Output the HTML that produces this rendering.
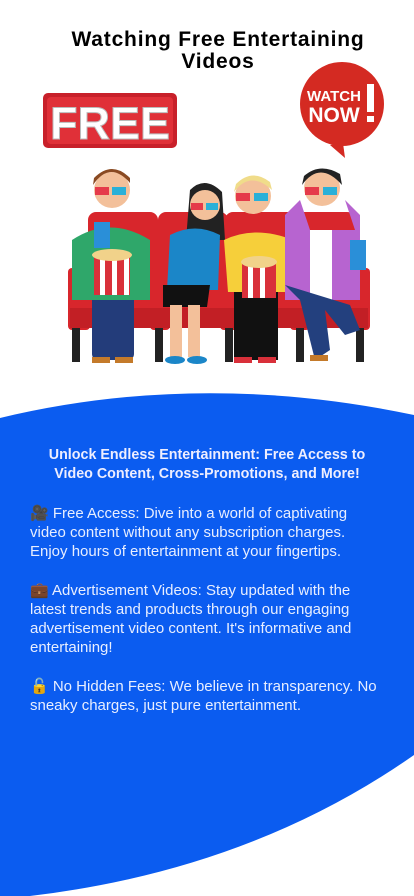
<!DOCTYPE html>
<html><head><meta charset="utf-8">
<style>
html,body{margin:0;padding:0;background:#fff;}
body{width:414px;height:896px;position:relative;overflow:hidden;font-family:"Liberation Sans",sans-serif;}
h1{position:absolute;top:29px;left:0;width:436px;margin:0;text-align:center;font-size:21px;line-height:22px;font-weight:bold;color:#000;letter-spacing:0.8px;}
#bg{position:absolute;left:0;top:0;}
.t{position:absolute;color:#fff;white-space:nowrap;}
.hd{top:446px;left:0;width:414px;text-align:center;font-weight:bold;font-size:14.3px;line-height:19px;color:#eef;}
.p{left:30px;font-size:15px;line-height:19px;color:#e8eeff;}
</style></head><body>
<svg id="bg" width="414" height="896" viewBox="0 0 414 896">
<path d="M0 418 Q200 370 414 415 L414 755 Q250 870 30 896 L0 896 Z" fill="#0b5cf0"/>
<rect x="43" y="93" width="134" height="55" rx="5" fill="#c8202a"/>
<rect x="47" y="97" width="126" height="47" rx="4" fill="#e03038"/>
<text x="110" y="139" text-anchor="middle" font-family="Liberation Sans" font-weight="bold" font-size="45" fill="#fff" stroke="#bbb" stroke-width="1">FREE</text>
<path d="M330 145 L345 158 L343 143 Z" fill="#d42a22"/>
<circle cx="342" cy="104" r="42" fill="#d42a22"/>
<text x="334" y="101" text-anchor="middle" font-family="Liberation Sans" font-weight="bold" font-size="15" fill="#fff">WATCH</text>
<text x="334" y="122" text-anchor="middle" font-family="Liberation Sans" font-weight="bold" font-size="21" fill="#fff">NOW</text>
<rect x="367" y="84" width="7" height="28" fill="#fff"/><rect x="367" y="116" width="7" height="6" fill="#fff"/>
<g fill="#d8262c">
<rect x="88" y="212" width="70" height="110" rx="8"/>
<rect x="158" y="212" width="70" height="110" rx="8"/>
<rect x="225" y="212" width="70" height="110" rx="8"/>
<rect x="295" y="212" width="60" height="110" rx="8"/>
<rect x="68" y="268" width="22" height="62" rx="4"/>
<rect x="150" y="268" width="20" height="62" rx="4"/>
<rect x="220" y="268" width="20" height="62" rx="4"/>
<rect x="290" y="268" width="20" height="62" rx="4"/>
<rect x="350" y="268" width="20" height="62" rx="4"/>
<rect x="70" y="308" width="298" height="20" fill="#c21f25"/>
</g>
<g fill="#222"><rect x="72" y="328" width="8" height="34"/><rect x="155" y="328" width="8" height="34"/><rect x="225" y="328" width="8" height="34"/><rect x="296" y="328" width="8" height="34"/><rect x="356" y="328" width="8" height="34"/></g>
<rect x="92" y="290" width="42" height="70" rx="6" fill="#233c7a"/>
<path d="M72 240 Q110 215 150 240 L150 300 L72 300 Z" fill="#2fa76a"/>
<rect x="94" y="255" width="36" height="40" fill="#d9303a"/><rect x="100" y="255" width="5" height="40" fill="#fff"/><rect x="112" y="255" width="5" height="40" fill="#fff"/><rect x="124" y="255" width="5" height="40" fill="#fff"/>
<ellipse cx="112" cy="255" rx="20" ry="6" fill="#f1d28a"/>
<rect x="94" y="222" width="16" height="26" fill="#2a8fd8"/>
<circle cx="112" cy="190" r="18" fill="#f3c09a"/><path d="M93 185 Q110 160 130 183 L130 178 Q112 160 94 178 Z" fill="#8a4a22"/>
<rect x="95" y="187" width="14" height="8" fill="#e53a4a"/><rect x="112" y="187" width="14" height="8" fill="#2ab0d8"/>
<rect x="92" y="357" width="18" height="6" fill="#c47a2a"/><rect x="115" y="357" width="18" height="6" fill="#c47a2a"/>
<path d="M190 190 Q205 175 222 192 L225 240 L186 240 Z" fill="#222"/>
<circle cx="205" cy="205" r="15" fill="#f3c09a"/>
<rect x="191" y="203" width="12" height="7" fill="#e53a4a"/><rect x="206" y="203" width="12" height="7" fill="#2ab0d8"/>
<path d="M170 235 Q195 222 220 235 L218 290 L167 290 Z" fill="#1b86c8"/>
<path d="M163 285 L210 285 L207 307 L163 307 Z" fill="#111"/>
<rect x="170" y="305" width="12" height="52" fill="#f3c09a"/><rect x="188" y="305" width="12" height="52" fill="#f3c09a"/>
<ellipse cx="175" cy="360" rx="10" ry="4" fill="#1b86c8"/><ellipse cx="197" cy="360" rx="10" ry="4" fill="#1b86c8"/>
<rect x="234" y="288" width="44" height="72" fill="#111"/>
<path d="M224 240 Q255 225 293 240 L290 292 L228 292 Z" fill="#f6cf3a"/>
<rect x="242" y="262" width="34" height="36" fill="#d9303a"/><rect x="248" y="262" width="5" height="36" fill="#fff"/><rect x="260" y="262" width="5" height="36" fill="#fff"/>
<ellipse cx="259" cy="262" rx="18" ry="6" fill="#f1d28a"/>
<circle cx="253" cy="196" r="18" fill="#f3c09a"/><path d="M234 192 Q250 170 272 190 L270 182 Q252 168 236 184 Z" fill="#f0dc8a"/>
<rect x="236" y="193" width="14" height="8" fill="#e53a4a"/><rect x="254" y="193" width="14" height="8" fill="#2ab0d8"/>
<rect x="234" y="357" width="18" height="6" fill="#d9303a"/><rect x="258" y="357" width="18" height="6" fill="#d9303a"/>
<path d="M285 215 L300 200 L310 230 L355 230 L345 200 L360 215 L360 300 L285 300 Z" fill="#b764d0"/>
<rect x="310" y="230" width="22" height="70" fill="#fff"/>
<path d="M285 285 L350 305 L360 330 L345 335 L325 310 L330 350 L315 360 L300 300 Z" fill="#23407e"/>
<rect x="310" y="355" width="18" height="6" fill="#c47a2a"/>
<circle cx="322" cy="188" r="18" fill="#f3c09a"/><path d="M302 185 Q320 160 342 185 L340 174 Q320 162 304 176 Z" fill="#222"/>
<rect x="305" y="187" width="14" height="8" fill="#e53a4a"/><rect x="323" y="187" width="14" height="8" fill="#2ab0d8"/>
<rect x="350" y="240" width="16" height="30" fill="#2a8fd8"/>
</svg>
<h1>Watching Free Entertaining<br>Videos</h1>
<div class="t hd">Unlock Endless Entertainment: Free Access to<br>Video Content, Cross-Promotions, and More!</div>
<div class="t p" style="top:504px">🎥 Free Access: Dive into a world of captivating<br>video content without any subscription charges.<br>Enjoy hours of entertainment at your fingertips.</div>
<div class="t p" style="top:581px">💼 Advertisement Videos: Stay updated with the<br>latest trends and products through our engaging<br>advertisement video content. It's informative and<br>entertaining!</div>
<div class="t p" style="top:677px">🔓 No Hidden Fees: We believe in transparency. No<br>sneaky charges, just pure entertainment.</div>
</body></html>
